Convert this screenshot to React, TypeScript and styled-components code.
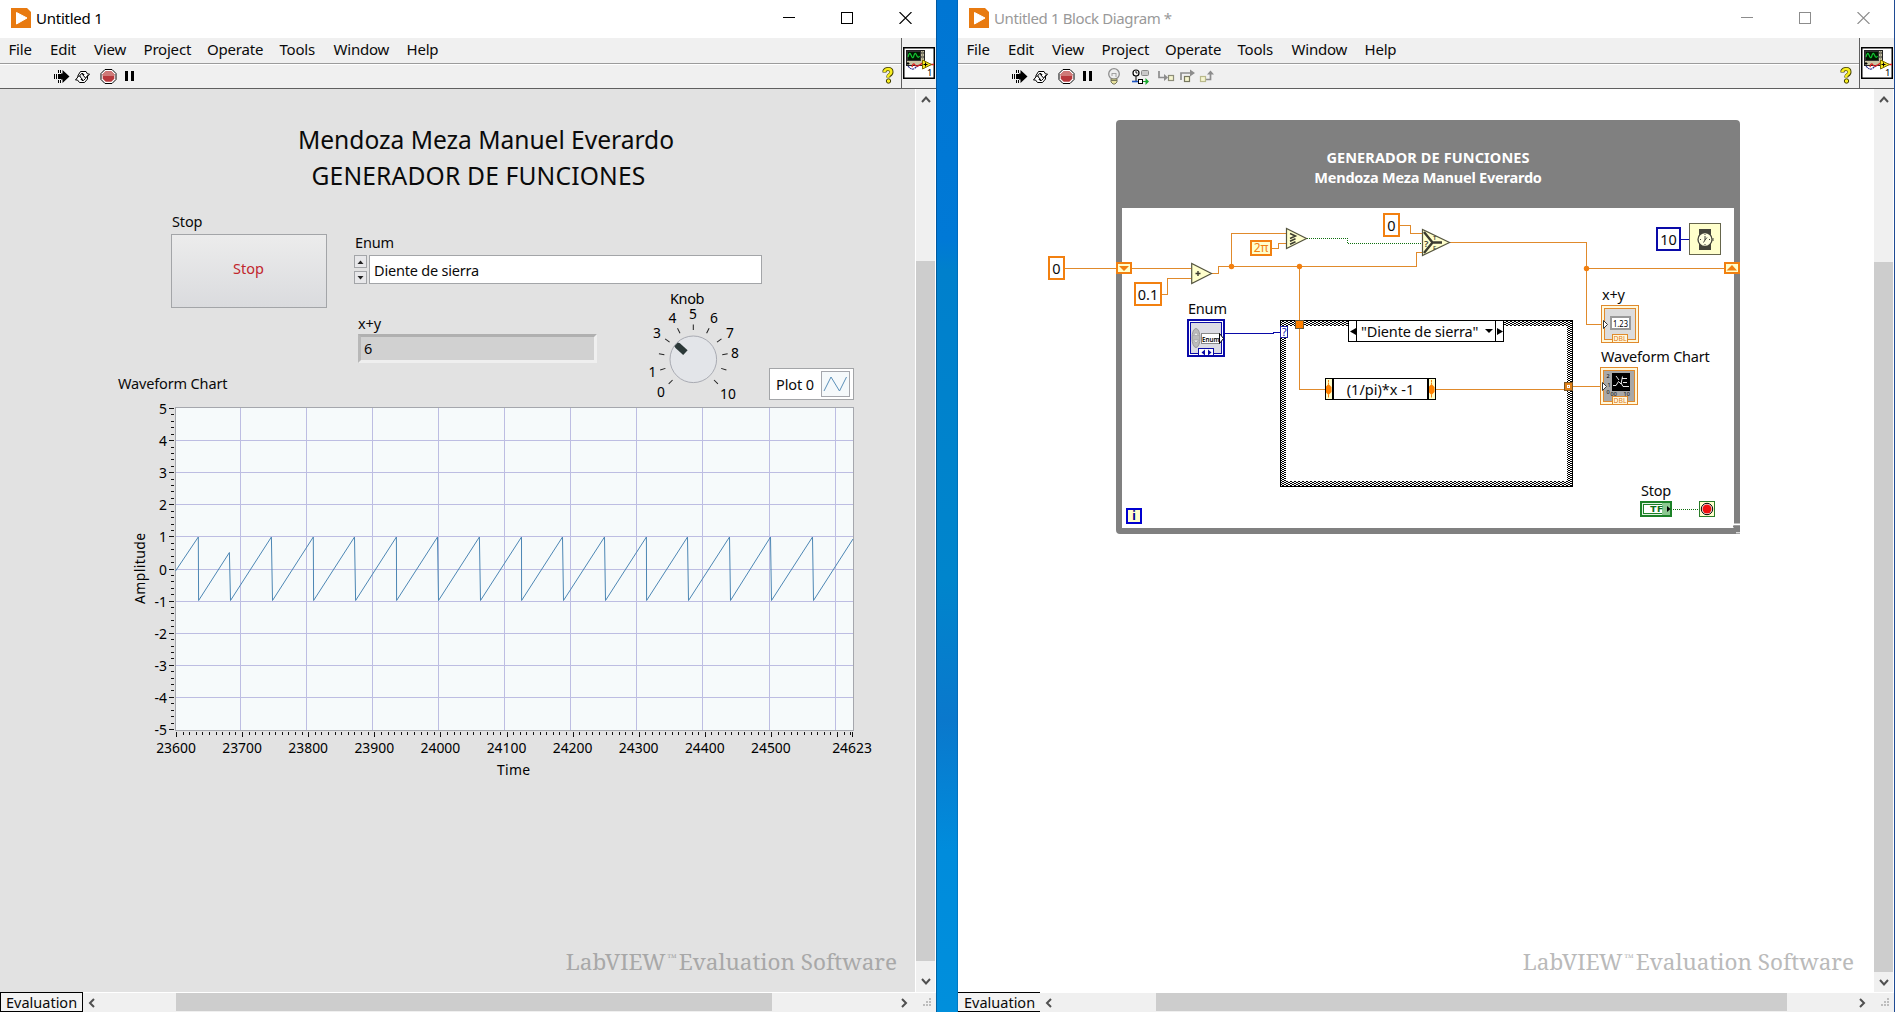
import React from 'react';
import styled, { createGlobalStyle, css } from 'styled-components';

const ui = `"Noto Sans", "Open Sans", sans-serif`;
const ORANGE = '#f28010';
const WIRE = '#e08a2c';
const BLUE = '#0a0aa8';
const CREAM = '#ffffcc';

const GlobalStyle = createGlobalStyle`
  * { box-sizing: border-box; }
  body { margin: 0; overflow: hidden; background: #0078d4; font-family: ${ui}; color: #0a0a0a; }
  svg { display: block; }
  svg text { font-family: ${ui}; }
`;

/* ---------- shell ---------- */

const Desktop = styled.div`
  display: flex;
  width: 1895px;
  height: 1012px;
  background: linear-gradient(#0076d3 0, #0079d6 240px, #0080cc 270px, #0085cc 580px, #0a78cc 720px, #008cdc 850px, #008fdc 100%);
`;
const DesktopStrip = styled.div`
  width: 22px;
  flex: none;
  border-left: 1px solid rgba(0, 50, 100, 0.45);
  border-right: 1px solid rgba(0, 60, 120, 0.25);
`;
const Frame = styled.section`
  display: flex;
  flex-direction: column;
  width: 936px;
  flex: none;
  background: #fff;
`;
const RightEdge = styled.div`
  width: 1px;
  background: #1f4b94;
`;
const TitleBar = styled.header<{ $dim?: boolean }>`
  display: flex;
  align-items: center;
  height: 38px;
  padding: 0 24px 2px 11px;
  font-size: 15px;
  color: ${(p) => (p.$dim ? '#999' : '#000')};
`;
const Title = styled.span<{ $ls: number }>`
  margin-left: 5px;
  flex: 1;
  line-height: 20px;
  white-space: nowrap;
  letter-spacing: ${(p) => p.$ls}px;
  padding-bottom: 1px;
`;
const Controls = styled.div`
  display: flex;
  gap: 46px;
`;
const Bars = styled.div`
  display: flex;
  height: 51px;
  background: #f0f0f0;
  border-bottom: 1px solid #5f5f5f;
`;
const BarStack = styled.div`
  display: flex;
  flex-direction: column;
  flex: 1;
`;
const MenuBar = styled.nav`
  display: flex;
  height: 26px;
  padding-left: 8.5px;
  border-bottom: 1px solid #9b9b9b;
`;
const MenuItem = styled.span<{ $w: number }>`
  width: ${(p) => p.$w}px;
  font-size: 15px;
  letter-spacing: -0.2px;
  line-height: 20px;
  padding-top: 1px;
`;
const ToolBar = styled.div`
  display: flex;
  align-items: center;
  justify-content: space-between;
  height: 24px;
  border-top: 1px solid #fff;
  padding: 0 7px 2px 54px;
`;
const ViSlot = styled.div`
  display: flex;
  width: 35px;
  padding: 9px 0 0 1px;
  border-left: 1px solid #5f5f5f;
`;
const Middle = styled.div`
  display: flex;
  height: 903px;
`;

/* ---------- scroll bars ---------- */

const VScroll = styled.div`
  display: flex;
  flex-direction: column;
  align-items: center;
  width: 21px;
  border-left: 1px solid #fff;
  border-right: 1px solid #fff;
  background: #f0f0f0;
`;
const VThumb = styled.div<{ $h: number }>`
  width: 19px;
  height: ${(p) => p.$h}px;
  background: #cdcdcd;
`;
const VGap = styled.div<{ $h: number; $pad: number }>`
  display: flex;
  justify-content: center;
  align-items: flex-start;
  width: 19px;
  height: ${(p) => p.$h}px;
  padding-top: ${(p) => p.$pad}px;
`;
const BottomBar = styled.footer`
  display: flex;
  height: 20px;
  border-top: 1px solid #fff;
  background: #f0f0f0;
`;
const EvalTag = styled.div<{ $open?: boolean }>`
  width: ${(p) => (p.$open ? 82 : 83)}px;
  height: 20px;
  margin-top: -1px;
  border: solid #000;
  border-width: ${(p) => (p.$open ? '1px 0' : '1px')};
  padding-left: ${(p) => (p.$open ? 6 : 5)}px;
  background: #f3f3f3;
  font-size: 14.5px;
  line-height: 18px;
  white-space: nowrap;
`;
const HGap = styled.div<{ $w: number; $end?: boolean }>`
  display: flex;
  align-items: center;
  justify-content: ${(p) => (p.$end ? 'space-between' : 'flex-start')};
  width: ${(p) => p.$w}px;
  padding: ${(p) => (p.$end ? '0 4px 0 0' : '0 4px')};
`;
const HArrowEnd = styled.div<{ $ml: number }>`
  margin-left: ${(p) => p.$ml}px;
`;
const HThumb = styled.div<{ $w: number }>`
  width: ${(p) => p.$w}px;
  height: 18px;
  background: #cdcdcd;
`;

/* ---------- front panel ---------- */

const PanelArea = styled.div<{ $white?: boolean }>`
  position: relative;
  display: flex;
  flex-direction: column;
  width: ${(p) => (p.$white ? 916 : 915)}px;
  background: ${(p) => (p.$white ? '#fff' : '#e2e2e2')};
`;
const Watermark = styled.div<{ $c: string; $r: number }>`
  position: absolute;
  right: ${(p) => p.$r}px;
  bottom: 15px;
  color: ${(p) => p.$c};
  font-family: "Noto Serif", "DejaVu Serif Condensed", "DejaVu Serif", serif;
  font-stretch: condensed;
  font-size: 22.5px;
  line-height: 30px;
  white-space: nowrap;
`;
const Tm = styled.sup`
  font-size: 11px;
  line-height: 0;
  vertical-align: 8px;
  margin: 0 2px;
`;
const Heading = styled.div`
  padding-top: 33px;
  font-size: 24.6px;
  line-height: 36px;
  white-space: nowrap;
`;
const HeadLine = styled.div<{ $l: number; $ls: number }>`
  padding-left: ${(p) => p.$l}px;
  letter-spacing: ${(p) => p.$ls}px;
`;
const ControlRow = styled.div`
  display: flex;
  height: 174px;
  padding-left: 171px;
`;
const Column = styled.div<{ $t: number; $l?: number }>`
  padding-top: ${(p) => p.$t}px;
  margin-left: ${(p) => p.$l ?? 0}px;
`;
const Caption = styled.div<{ $l?: number; $b?: number }>`
  font-size: 14.5px;
  line-height: 20px;
  white-space: nowrap;
  letter-spacing: -0.15px;
  padding-left: ${(p) => p.$l ?? 0}px;
  margin-bottom: ${(p) => p.$b ?? 0}px;
`;
const StopButton = styled.button`
  display: block;
  width: 156px;
  height: 74px;
  padding: 0 1px 6px 0;
  border: 1px solid #a3a5a8;
  background: linear-gradient(#ececec, #dadbde);
  color: #c1272d;
  font: 14.5px ${ui};
`;
const EnumRow = styled.div`
  display: flex;
  gap: 2px;
`;
const Spinner = styled.div`
  display: flex;
  flex-direction: column;
  gap: 3px;
`;
const SpinButton = styled.div`
  display: flex;
  align-items: center;
  justify-content: center;
  width: 13px;
  height: 13px;
  border: 1px solid #a3a5a8;
  background: #e8e8ea;
`;
const EnumBox = styled.div`
  width: 393px;
  height: 29px;
  border: 1px solid #a3a5a8;
  background: #fff;
  padding: 4px 0 0 4px;
  font-size: 14.5px;
  line-height: 20px;
  letter-spacing: -0.2px;
`;
const IndicatorRow = styled.div`
  display: flex;
  padding-top: 29px;
`;
const Indicator = styled.div`
  width: 239px;
  height: 29px;
  margin-left: 4px;
  border: 3px solid;
  border-color: #b0b0b0 #efefef #efefef #b8b8b8;
  background: #d1d1d1;
  padding: 1px 0 0 3px;
  font-size: 14.5px;
  line-height: 20px;
`;
const KnobSlot = styled.div`
  margin: -31px 0 0 43px;
`;
const LegendRow = styled.div`
  display: flex;
  justify-content: space-between;
  width: 854px;
  height: 32px;
  padding: 0 0 0 118px;
  align-items: flex-start;
`;
const Legend = styled.div`
  display: flex;
  align-items: center;
  justify-content: space-between;
  width: 85px;
  height: 32px;
  border: 1px solid #a3a5a8;
  background: #fff;
  padding: 0 3px 1px 6px;
  font-size: 14.5px;
  letter-spacing: -0.1px;
  white-space: nowrap;
`;

/* ---------- diagram nodes ---------- */

const at = css<{ $x: number; $y: number }>`
  position: absolute;
  left: ${(p) => p.$x - 958}px;
  top: ${(p) => p.$y - 89}px;
`;
const DiagramLabel = styled.div<{ $x: number; $y: number; $ls?: number }>`
  ${at}
  font-size: 14.5px;
  line-height: 20px;
  letter-spacing: ${(p) => p.$ls ?? -0.2}px;
  white-space: nowrap;
`;
const LoopFrame = styled.div<{ $x: number; $y: number }>`
  ${at}
  width: 624px;
  height: 414px;
  border: 6px solid #808080;
  border-top-width: 88px;
  border-radius: 4px 4px 0 4px;
`;
const LoopTitle = styled.div<{ $x: number; $y: number; $ls: number }>`
  ${at}
  width: 624px;
  color: #fff;
  text-align: center;
  font-weight: 700;
  font-size: 14.5px;
  line-height: 20px;
  letter-spacing: ${(p) => p.$ls}px;
`;
const Constant = styled.div<{ $x: number; $y: number; $w: number; $blue?: boolean }>`
  ${at}
  width: ${(p) => p.$w}px;
  height: 24px;
  border: 2px solid ${(p) => (p.$blue ? BLUE : ORANGE)};
  background: #fff;
  text-align: center;
  font-size: 14.5px;
  line-height: 21px;
`;
const PiConstant = styled.div<{ $x: number; $y: number }>`
  ${at}
  width: 22px;
  height: 16px;
  border: 2px solid ${ORANGE};
  background: ${CREAM};
  color: ${ORANGE};
  text-align: center;
  font-size: 12px;
  line-height: 11px;
`;
const CaseSelector = styled.div<{ $x: number; $y: number }>`
  ${at}
  display: flex;
  align-items: center;
  width: 156px;
  height: 22px;
  border: 1px solid #000;
  background: #fff;
  font-size: 14.5px;
  letter-spacing: -0.15px;
  white-space: nowrap;
`;
const SelectorArrow = styled.div<{ $right?: boolean }>`
  display: flex;
  align-items: center;
  justify-content: center;
  width: 8px;
  height: 20px;
  flex: none;
  border: 0 solid #000;
  border-width: ${(p) => (p.$right ? '0 0 0 1px' : '0 1px 0 0')};
`;
const SelectorText = styled.div`
  display: flex;
  align-items: center;
  justify-content: space-between;
  flex: 1;
  line-height: 18px;
  padding: 0 2px 1px 4px;
`;
const Expression = styled.div<{ $x: number; $y: number }>`
  ${at}
  display: flex;
  width: 111px;
  height: 22px;
  border: 1px solid #000;
  background: #fff;
  font-size: 14.5px;
`;
const ExprSide = styled.div<{ $right?: boolean }>`
  width: 8px;
  flex: none;
  background: ${CREAM};
  border: 0 solid #000;
  border-width: ${(p) => (p.$right ? '0 0 0 2px' : '0 2px 0 0')};
`;
const ExprText = styled.div`
  flex: 1;
  text-align: center;
  line-height: 20px;
  white-space: nowrap;
`;
const IterBox = styled.div<{ $x: number; $y: number }>`
  ${at}
  width: 16px;
  height: 16px;
  border: 2px solid #0000d0;
  background: ${CREAM};
  color: #000090;
  text-align: center;
  font-weight: 700;
  font-size: 12px;
  line-height: 12px;
`;
const Layer = styled.svg`
  position: absolute;
  left: 0;
  top: 0;
`;

/* ---------- icons ---------- */

const Logo = () => (
  <svg width="20" height="20">
    <path d="M0 0H16L20 4V20H0Z" fill="#e87a10" />
    <path d="M5.5 4.5L16 10L5.5 16Z" fill="#fff" stroke="#fff" strokeLinejoin="round" />
  </svg>
);

const WindowButtons = ({ c }: { c: string }) => (
  <Controls>
    <svg width="12" height="12" shapeRendering="crispEdges"><path d="M0 5.5H12" stroke={c} /></svg>
    <svg width="12" height="12" shapeRendering="crispEdges"><rect x=".5" y=".5" width="11" height="11" fill="none" stroke={c} /></svg>
    <svg width="13" height="12"><path d="M.5 0L12.5 12M12.5 0L.5 12" stroke={c} strokeWidth="1.1" /></svg>
  </Controls>
);

const RunIcons = ({ debug }: { debug?: boolean }) => (
  <svg width="210" height="20" viewBox="54 66 210 20">
    <g fill="#000" shapeRendering="crispEdges">
      <path d="M54 74h1v5h-1zM56 74h1v5h-1zM58 70h1v3h-1zM58 74h4v5h-4zM58 80h1v3h-1zM60 70h1v3h-1zM60 80h1v3h-1z" />
    </g>
    <path d="M61 73.5H62.5V70L69.5 76.5L62.5 83V79.5H61Z" />
    <g fill="#fff" stroke="#000" strokeWidth="1">
      <path d="M78 78.5V75.5L80.5 71.5H86L87.5 74H89.5L86 78.5L82.5 74.5H84L83 73.5H81.5L80 75.5V78.5Z" />
      <path d="M87.5 75.5V79L84.5 82.5H79.5L77.5 80H75.5L79 75.5L82.5 79.5H81L82 80.5H83.5L85.5 78.5Z" />
    </g>
    <path d="M105 69.5H112L116 73.5V79.5L112 83.5H105L101 79.5V73.5Z" fill="#fff" stroke="#000" strokeWidth="1" />
    <path d="M105.7 71.3H111.3L114.3 74.3V78.7L111.3 81.7H105.7L102.7 78.7V74.3Z" fill="#b8383c" />
    <path d="M105.7 71.3H111.3L114.3 74.3V76H102.7V74.3Z" fill="#cf7a78" />
    <path d="M125 71h3v10h-3zM131 71h3v10h-3z" />
    {debug && (
      <g>
        <circle cx="156" cy="74" r="5.3" fill="#eee" stroke="#8f8f8f" strokeWidth="1.3" />
        <path d="M154 76v-3l1 1 1-1 1 1 1-1v4" fill="none" stroke="#999" strokeWidth=".9" />
        <path d="M153 79h6v3l-2 2h-2l-2-2z" fill="#e9e3a0" stroke="#77775a" />
        <path d="M153 80.5h6" stroke="#77775a" />
        <circle cx="178" cy="73" r="3" fill="#fff" stroke="#000" strokeWidth="1.2" />
        <path d="M178 71v2h1.5" stroke="#000" fill="none" strokeWidth=".9" />
        <rect x="183.5" y="70.5" width="7" height="5" rx="1" fill="#c9c9c9" stroke="#8a8a8a" />
        <path d="M178 76v5" stroke="#000" />
        <path d="M174 81.5h6" stroke="#1a50c0" strokeWidth="1.6" />
        <rect x="180.5" y="79.5" width="4" height="4" fill="#fff" stroke="#000" />
        <path d="M185 81h2.5v-3l3.500 3.500-3.500 3.500v-3h-2.500z" fill="#17a82c" />
        <g fill="none" stroke="#8d8d8d" strokeWidth="1.7">
          <path d="M201 71v6.5h6" />
          <path d="M223 80v-7h10" />
          <path d="M248 79.5h4.5v-6" />
        </g>
        <path d="M206 74l4 3.500-4 3.500zM232 69.500l5 3.500-5 3.500zM249 74.500l3.500-4 3.500 4z" fill="#8d8d8d" />
        <g fill="#f6f6cf" strokeWidth="1.2">
          <rect x="210.5" y="75.5" width="5" height="5" stroke="#8d8d7a" />
          <rect x="226.5" y="76.5" width="5" height="5" stroke="#77775f" />
          <rect x="242.5" y="76.5" width="5" height="5" stroke="#b9b98c" />
        </g>
      </g>
    )}
  </svg>
);

const HelpIcon = () => (
  <svg width="12" height="17" viewBox="0 0 12 17">
    <path d="M2.5 5.5V4Q3.5 2 6 2Q9.5 2 9.5 5Q9.5 7 7.5 8Q6.2 8.7 6.2 10.5" fill="none" stroke="#403c00" strokeWidth="4" />
    <path d="M2.5 5V4Q3.5 2 6 2Q9.3 2 9.3 5Q9.3 6.8 7.3 7.8Q6 8.5 6 10.5" fill="none" stroke="#f8ee20" strokeWidth="2.6" />
    <circle cx="6.5" cy="14" r="2.2" fill="#f8ee20" stroke="#403c00" />
  </svg>
);

const ViIcon = () => (
  <svg width="32" height="32">
    <rect x=".75" y=".75" width="30.5" height="30.5" fill="#fff" stroke="#000" strokeWidth="1.5" />
    <rect x="3.5" y="3.5" width="18" height="15" fill="#c9c4a4" stroke="#222" />
    <rect x="4.5" y="4.5" width="13" height="9" fill="#001800" stroke="#333" />
    <path d="M5 10Q6.5 4 8 8T10.5 10Q12 4 13.5 8T16.5 9" fill="none" stroke="#12c832" strokeWidth="1.2" />
    <circle cx="19.5" cy="6" r="1" fill="none" stroke="#333" strokeWidth=".8" />
    <circle cx="19.5" cy="10" r="1" fill="none" stroke="#333" strokeWidth=".8" />
    <path d="M5 15v3M3.5 16.5h3" stroke="#000" />
    <path d="M5 19Q9 24 12 21L16 18" fill="none" stroke="#28288c" strokeWidth="1.2" strokeDasharray="2 .6" />
    <path d="M9 20Q10 15 12 18T20 15.5M27 17.5H31" fill="none" stroke="#e02020" strokeWidth="1.3" />
    <path d="M19.5 13L28.5 17.5L19.5 22Z" fill="#f8e820" stroke="#7a6c00" />
    <path d="M22.5 15.5v4M20.5 17.5h4" stroke="#000" />
    <text x="24" y="29" fontSize="9.5">1</text>
  </svg>
);

const Chevron = ({ dir }: { dir: 'up' | 'down' | 'left' | 'right' }) => {
  const d = {
    up: 'M1 7L5 2.5L9 7',
    down: 'M1 3L5 7.5L9 3',
    left: 'M7 1L3 5L7 9',
    right: 'M3 1L7 5L3 9',
  }[dir];
  return <svg width="10" height="10"><path d={d} fill="none" stroke="#505050" strokeWidth="2" /></svg>;
};

const Grip = () => (
  <svg width="9" height="9" fill="#bdbdbd">
    <path d="M6 0h2v2H6zM3 3h2v2H3zM6 3h2v2H6zM0 6h2v2H0zM3 6h2v2H3zM6 6h2v2H6z" />
  </svg>
);

/* ---------- knob ---------- */

const knobLabels: [string, number, number][] = [
  ['0', 661, 397], ['1', 652.5, 376.5], ['3', 657, 337.5], ['4', 672.5, 322.5], ['5', 693, 319],
  ['6', 714, 322.5], ['7', 730, 337.5], ['8', 735, 358], ['10', 728, 398.5],
];

const Knob = () => (
  <svg width="110" height="122" viewBox="640 282 110 122">
    <text x="670" y="303.5" fontSize="14.5" textLength="34.5">Knob</text>
    {knobLabels.map(([t, x, y]) => (
      <text key={t} x={x} y={y} fontSize="13.8" textAnchor="middle">{t}</text>
    ))}
    {Array.from({ length: 11 }, (_, i) => (
      <path key={i} d="M693.3 324.5V330" stroke="#222" transform={`rotate(${-135 + i * 27} 693.3 359.3)`} />
    ))}
    <circle cx="693.3" cy="359.3" r="23.3" fill="#e3e5e9" stroke="#a9abb3" />
    <path d="M690 336.5h5l1 2v10.5h-6.500v-10.5z" fill="#2b3838" transform="rotate(-47 693.3 359.3)" />
  </svg>
);

/* ---------- chart ---------- */

const gridX = [240.5, 306.5, 372.5, 438.5, 504.5, 570.5, 636.5, 702.5, 769.5, 835.5];
const gridY = [440.5, 472.5, 504.5, 536.5, 569.5, 601.5, 633.5, 665.5, 697.5];
const tickY = [408.5, 440.5, 472.5, 504.5, 536.5, 569.5, 601.5, 633.5, 665.5, 697.5, 729.5];
const peaks = [198.3, 229.4, 271.4, 313.3, 354.5, 396.4, 437.5, 479.4, 521.5, 562.5, 604.5, 646.4, 687.5, 729.5, 770.5, 812.5];
const drops = [198.6, 230.5, 272.5, 313.6, 355.6, 396.6, 438.5, 480.5, 521.6, 563.5, 605.5, 646.6, 688.5, 730.5, 771.5, 813.5];

const Chart = () => {
  const wave = ['175.5,571']
    .concat(peaks.flatMap((x, i) => [`${x},${i === 1 ? 552.5 : 537}`, `${drops[i]},600.5`]), ['853,539'])
    .join(' ');
  return (
    <svg width="915" height="400" viewBox="0 400 915 400">
      <rect x="175.5" y="407.5" width="678" height="323" fill="#f6fafb" stroke="#a5a7ad" />
      <g stroke="#bdbde2" shapeRendering="crispEdges">
        {gridX.map((x) => <path key={x} d={`M${x} 408V730`} />)}
        {gridY.map((y) => <path key={y} d={`M176 ${y}H853`} />)}
      </g>
      <polyline points={wave} fill="none" stroke="#4c86b4" strokeWidth="1" />
      <g stroke="#111" shapeRendering="crispEdges">
        {tickY.map((y) => <path key={y} d={`M169 ${y}H174`} />)}
        {Array.from({ length: 51 }, (_, i) => <path key={i} d={`M171 ${Math.round(408 + i * 6.42) + 0.5}H174`} />)}
        {Array.from({ length: 11 }, (_, i) => <path key={i} d={`M${Math.round(176 + i * 66.1) + 0.5} 732V737`} />)}
        {Array.from({ length: 103 }, (_, i) => <path key={i} d={`M${Math.round(176 + i * 6.61) + 0.5} 732V735`} />)}
        <path d="M852.5 732V737" />
      </g>
      <g fontSize="13.9">
        {tickY.map((y, i) => <text key={y} x="167" y={y + 5} textAnchor="end">{5 - i}</text>)}
        <g textAnchor="middle">
          {Array.from({ length: 10 }, (_, i) => (
            <text key={i} x={176 + i * 66.1} y="752.5">{23600 + i * 100}</text>
          ))}
          <text x="852" y="752.5">24623</text>
          <text x="513.5" y="774.5" textLength="33">Time</text>
          <text transform="translate(145 568.5) rotate(-90)" textLength="71">Amplitude</text>
        </g>
      </g>
    </svg>
  );
};

/* ---------- block diagram artwork ---------- */

const Wires = () => (
  <Layer width="916" height="903" viewBox="958 89 916 903">
    <defs>
      <pattern id="weave" width="4" height="2" patternUnits="userSpaceOnUse">
        <rect width="4" height="2" fill="#fff" />
        <path d="M0 0h2v1H0zM2 1h2v1H2z" fill="#000" />
      </pattern>
    </defs>
    <g shapeRendering="crispEdges" fill="none" stroke={WIRE}>
      <path d="M1065 268.5H1191M1162 294.5H1167.5V278.5H1191M1212 273.5H1218.5V266.5H1416.5V252.5H1422" />
      <path d="M1231.5 266V233.5H1286M1272 248.5H1278.5V243.5H1286M1400 225.5H1410.5V233.5H1422" />
      <path d="M1450 242.5H1586.5V324.5H1601M1586.5 268.5H1724" />
      <path d="M1299.5 266V389.5H1325M1436 389.5H1566M1572 386.5H1600" />
    </g>
    <g fill={ORANGE}>
      <circle cx="1231.5" cy="266.5" r="2.7" />
      <circle cx="1299.5" cy="266.5" r="2.7" />
      <circle cx="1586.5" cy="268.5" r="2.7" />
    </g>
    <path d="M1307 238.5H1347.5V243.5H1422M1673 509.5H1698" fill="none" stroke="#107010" strokeDasharray="1 1" shapeRendering="crispEdges" />
    <path d="M1225 333.5H1273.5V332.5H1280M1681 239.5H1689" fill="none" stroke={BLUE} shapeRendering="crispEdges" />

    {/* case structure border */}
    <g shapeRendering="crispEdges">
      <path d="M1280 320H1573V487H1280ZM1286 326V481H1567V326Z" fill="url(#weave)" fillRule="evenodd" />
      <rect x="1280.5" y="320.5" width="292" height="166" fill="none" stroke="#000" />
      <rect x="1295.5" y="320.5" width="8" height="8" fill="#ff8000" stroke="#6a5a3a" />
      <rect x="1564.5" y="382.5" width="8" height="8" fill="#e08018" stroke="#7a5420" />
      <rect x="1567.5" y="385.5" width="2" height="2" fill="#e08018" stroke="#fff" />
      <rect x="1280.5" y="326.5" width="7" height="11" fill="#fff" stroke="#2020a0" />
    </g>
    <text x="1284.2" y="336.2" fontSize="10.5" fill={BLUE} textAnchor="middle">?</text>

    {/* shift registers */}
    <g fill="#ffffcc" stroke={ORANGE} strokeWidth="2" shapeRendering="crispEdges">
      <rect x="1117" y="263" width="14" height="10" />
      <rect x="1725" y="263" width="14" height="10" />
    </g>
    <path d="M1119 266H1129L1124 271ZM1726.5 270.5H1737L1732 265Z" fill={ORANGE} />

    {/* arithmetic primitives */}
    <g fill="#ffffcc" stroke="#55553f" strokeWidth="1.2">
      <path d="M1191.7 263.5V283.5L1211.5 273.5Z" />
      <path d="M1286.5 228.5V248.5L1306.5 238.5Z" />
      <path d="M1422.5 229.5V255.5L1449.5 242.5Z" />
    </g>
    <g stroke="#3c3c30" fill="none">
      <path d="M1195.5 273.5h5M1198 271v5" strokeWidth="1.4" />
      <path d="M1290 233.5l5.5 2.500-5.500 2.500M1290 241.300l5.500-2.500M1290 244.300l5.500-2.500" strokeWidth="1.5" />
      <path d="M1424 232l8.500 10.500L1424 253M1432 242.500h10" strokeWidth="2.4" />
    </g>
    <g fill="#3c3c30" fontSize="6" fontWeight="600">
      <text x="1424" y="246.5" fontSize="9.5">?</text>
      <text x="1433" y="240.3">T</text>
      <text x="1433" y="249.5">F</text>
    </g>

    {/* wait timer */}
    <rect x="1689.5" y="223.5" width="31" height="31" fill="#ffffcc" stroke="#66664c" />
    <path d="M1699 229h12v6h-12zM1699 244h12v6h-12z" fill="#44443a" />
    <circle cx="1705" cy="239.5" r="7" fill="#ffffe0" stroke="#44443a" strokeWidth="1.3" />
    <path d="M1705 236v4l-1.5 2.500M1707 237.500l-2 2.500M1700 239.500h1M1709 239.500h1M1713 238v3M1705 234v1M1705 244v1" stroke="#44443a" fill="none" />

    {/* enum terminal */}
    <g shapeRendering="crispEdges">
      <rect x="1188" y="320" width="36" height="36" fill="#fff" stroke={BLUE} strokeWidth="2" />
      <rect x="1190.5" y="322.5" width="31" height="31" fill="#dcdce4" stroke={BLUE} />
    </g>
    <ellipse cx="1196" cy="338" rx="4" ry="9.5" fill="#bbb" stroke="#999" />
    <path d="M1193.5 335.5l2.500-3 2.500 3zM1193.5 340l2.500 3 2.500-3z" fill="#eee" stroke="#999" strokeWidth=".6" />
    <rect x="1201.5" y="333.5" width="18" height="10" fill="#fff" stroke="#888" shapeRendering="crispEdges" />
    <text x="1202" y="341.5" fontSize="7.4" fontWeight="600" textLength="17.5" lengthAdjust="spacingAndGlyphs">Enum</text>
    <path d="M1219.5 333.5v10l4-5z" fill="#fff" stroke="#000" />
    <rect x="1198.5" y="348.5" width="15" height="7" fill="#fff" stroke={BLUE} shapeRendering="crispEdges" />
    <path d="M1205 349.5v6l-3.500-3zM1208 349.5v6l3.500-3z" fill={BLUE} />

    {/* numeric indicator and chart terminals */}
    <g shapeRendering="crispEdges">
      <rect x="1601.5" y="305.5" width="37" height="37" fill="#fff8dc" stroke={WIRE} />
      <rect x="1604.5" y="308.5" width="31" height="31" fill="#dcdcdc" stroke={WIRE} />
      <rect x="1611" y="317" width="19" height="12" fill="#fff" stroke="#999" strokeWidth="2" />
      <rect x="1612.5" y="334.5" width="15" height="8" fill="#fff8dc" stroke={WIRE} />
      <rect x="1600.5" y="367.5" width="37" height="37" fill="#fff8dc" stroke={WIRE} />
      <rect x="1603.5" y="370.5" width="31" height="31" fill="#a8a8a8" stroke={WIRE} />
      <rect x="1612" y="373" width="18" height="18" fill="#000" />
      <rect x="1612.5" y="396.5" width="15" height="8" fill="#fff8dc" stroke={WIRE} />
    </g>
    <text x="1613" y="326.8" fontSize="9" textLength="15" lengthAdjust="spacingAndGlyphs">1.23</text>
    <g fill="#e07a18" fontSize="7.5">
      <text x="1613.5" y="341.3" textLength="13" lengthAdjust="spacingAndGlyphs">DBL</text>
      <text x="1613.5" y="403.3" textLength="13" lengthAdjust="spacingAndGlyphs">DBL</text>
    </g>
    <g fontSize="5.5">
      <text x="1606.5" y="377.5">2</text><text x="1607.5" y="386.5">1</text><text x="1606.5" y="394">0</text>
      <text x="1610.5" y="396">00</text><text x="1623.5" y="396">10</text>
    </g>
    <path d="M1613 385.5h3l2.500-4 2.500 2.500 1.500-7.500M1616 376l3 4M1621 383l2 3.500h6M1622 378.500h5M1623 382.500h4" stroke="#fff" strokeWidth=".9" fill="none" />
    <path d="M1603.5 320.5v8l4-4zM1602.5 382.5v8l4-4z" fill="#fff" stroke="#333" />

    {/* boolean terminal and loop condition */}
    <rect x="1641" y="502" width="30" height="14" fill="#e4f4e4" stroke="#1c8228" strokeWidth="2" />
    <rect x="1643.5" y="504.5" width="25" height="9" fill="#fff" stroke="#1c8228" />
    <rect x="1662" y="503" width="8" height="12" fill="#8cc890" />
    <text x="1650" y="512.3" fontSize="9" fontWeight="700" fill="#0c7018" textLength="13" lengthAdjust="spacingAndGlyphs">TF</text>
    <path d="M1667 506v6l3.500-3z" fill="#000" />
    <rect x="1699.5" y="501.5" width="15" height="15" fill="#ffffcc" stroke="#2a7c2a" />
    <circle cx="1707" cy="509" r="5.7" fill="#fff" stroke="#000" />
    <circle cx="1707" cy="509" r="4.5" fill="#f01010" />

    {/* loop resize corner */}
    <path d="M1734 524.5H1740" stroke="#fff" strokeWidth="2" />
    <path d="M1733 526.5H1740" stroke="#808080" strokeWidth="2" />
    <path d="M1736 532.8H1740" stroke="#fff" strokeWidth="1" />
  </Layer>
);

const ExprGlyphs = () => (
  <Layer width="916" height="903" viewBox="958 89 916 903">
    <path d="M1328.5 380V398M1431.5 380V398" stroke={ORANGE} strokeDasharray="2 .5" />
    <path d="M1326 386.5l2.500-2.500 3 3v5l-3 3-2.500-2.500zM1429 386.5l2.500-2.500 3 3v5l-3 3-2.500-2.500z" fill="#ff8000" />
  </Layer>
);

const menus: [string, number][] = [
  ['File', 41.5], ['Edit', 44], ['View', 49.5], ['Project', 63.5], ['Operate', 72.5], ['Tools', 54], ['Window', 73], ['Help', 50],
];

interface WindowProps {
  title: string;
  titleSpacing: number;
  dim?: boolean;
  thumb: [number, number];
  hthumb: [number, number];
  children: React.ReactNode;
}

const AppWindow = ({ title, titleSpacing, dim, thumb, hthumb, children }: WindowProps) => {
  const tag = dim ? 82 : 83;
  const right = 936 - hthumb[0] - hthumb[1];
  return (
    <Frame>
      <TitleBar $dim={dim}>
        <Logo />
        <Title $ls={titleSpacing}>{title}</Title>
        <WindowButtons c={dim ? '#8c8c8c' : '#000'} />
      </TitleBar>
      <Bars>
        <BarStack>
          <MenuBar>{menus.map(([m, w]) => <MenuItem key={m} $w={w}>{m}</MenuItem>)}</MenuBar>
          <ToolBar><RunIcons debug={dim} /><HelpIcon /></ToolBar>
        </BarStack>
        <ViSlot><ViIcon /></ViSlot>
      </Bars>
      <Middle>
        {children}
        <VScroll>
          <VGap $h={thumb[0] - 89} $pad={6}><Chevron dir="up" /></VGap>
          <VThumb $h={thumb[1] - thumb[0]} />
          <VGap $h={992 - thumb[1]} $pad={dim ? 5 : 15}><Chevron dir="down" /></VGap>
        </VScroll>
      </Middle>
      <BottomBar>
        <EvalTag $open={dim}>Evaluation</EvalTag>
        <HGap $w={hthumb[0] - tag}><Chevron dir="left" /></HGap>
        <HThumb $w={hthumb[1]} />
        <HGap $w={right} $end><HArrowEnd $ml={right - 37}><Chevron dir="right" /></HArrowEnd><Grip /></HGap>
      </BottomBar>
    </Frame>
  );
};

const FrontPanel = () => (
  <PanelArea>
    <Heading>
      <HeadLine $l={298} $ls={-0.03}>Mendoza Meza Manuel Everardo</HeadLine>
      <HeadLine $l={311.5} $ls={0.17}>GENERADOR DE FUNCIONES</HeadLine>
    </Heading>
    <ControlRow>
      <Column $t={17}>
        <Caption $l={1} $b={3}>Stop</Caption>
        <StopButton>Stop</StopButton>
      </Column>
      <Column $t={38} $l={27}>
        <Caption $l={1} $b={3}>Enum</Caption>
        <EnumRow>
          <Spinner>
            <SpinButton><svg width="7" height="4"><path d="M.5 4L3.5 .5L6.5 4Z" fill="#222" /></svg></SpinButton>
            <SpinButton><svg width="7" height="4"><path d="M.5 0L3.5 3.5L6.5 0Z" fill="#222" /></svg></SpinButton>
          </Spinner>
          <EnumBox>Diente de sierra</EnumBox>
        </EnumRow>
        <IndicatorRow>
          <div>
            <Caption $l={4} $b={1}>x+y</Caption>
            <Indicator>6</Indicator>
          </div>
          <KnobSlot><Knob /></KnobSlot>
        </IndicatorRow>
      </Column>
    </ControlRow>
    <LegendRow>
      <Column $t={5}><Caption>Waveform Chart</Caption></Column>
      <Legend>
        Plot 0
        <svg width="29" height="26">
          <rect x=".5" y=".5" width="28" height="25" fill="#f5f9fb" stroke="#a5a7ad" />
          <path d="M3 20L10 6L18.5 20L25.5 6" fill="none" stroke="#5a8fb8" />
        </svg>
      </Legend>
    </LegendRow>
    <Chart />
    <Watermark $c="#a8a8a8" $r={18}>LabVIEW<Tm>™</Tm>Evaluation Software</Watermark>
  </PanelArea>
);

const BlockDiagram = () => (
  <PanelArea $white>
    <LoopFrame $x={1116} $y={120} />
    <LoopTitle $x={1116} $y={147} $ls={0.1}>GENERADOR DE FUNCIONES</LoopTitle>
    <LoopTitle $x={1116} $y={167} $ls={-0.22}>Mendoza Meza Manuel Everardo</LoopTitle>
    <Wires />
    <Constant $x={1048} $y={256} $w={17}>0</Constant>
    <Constant $x={1134} $y={282} $w={28}>0.1</Constant>
    <Constant $x={1383} $y={213} $w={17}>0</Constant>
    <Constant $x={1656} $y={227} $w={25} $blue>10</Constant>
    <PiConstant $x={1250} $y={240}>2π</PiConstant>
    <DiagramLabel $x={1188} $y={298}>Enum</DiagramLabel>
    <DiagramLabel $x={1602} $y={284}>x+y</DiagramLabel>
    <DiagramLabel $x={1601} $y={346}>Waveform Chart</DiagramLabel>
    <DiagramLabel $x={1641} $y={480}>Stop</DiagramLabel>
    <CaseSelector $x={1348} $y={320}>
      <SelectorArrow><svg width="6" height="7"><path d="M6 0V7L0 3.5Z" /></svg></SelectorArrow>
      <SelectorText>
        "Diente de sierra"
        <svg width="8" height="4"><path d="M0 0H8L4 4Z" /></svg>
      </SelectorText>
      <SelectorArrow $right><svg width="6" height="7"><path d="M0 0V7L6 3.5Z" /></svg></SelectorArrow>
    </CaseSelector>
    <Expression $x={1325} $y={378}>
      <ExprSide />
      <ExprText>(1/pi)*x -1</ExprText>
      <ExprSide $right />
    </Expression>
    <ExprGlyphs />
    <IterBox $x={1126} $y={508}>i</IterBox>
    <Watermark $c="#bababa" $r={19}>LabVIEW<Tm>™</Tm>Evaluation Software</Watermark>
  </PanelArea>
);

export default function App() {
  return (
    <Desktop>
      <GlobalStyle />
      <AppWindow title="Untitled 1" titleSpacing={-0.25} thumb={[261, 961]} hthumb={[176, 596]}>
        <FrontPanel />
      </AppWindow>
      <DesktopStrip />
      <AppWindow title="Untitled 1 Block Diagram *" titleSpacing={-0.38} dim thumb={[262, 972]} hthumb={[198, 631]}>
        <BlockDiagram />
      </AppWindow>
      <RightEdge />
    </Desktop>
  );
}
